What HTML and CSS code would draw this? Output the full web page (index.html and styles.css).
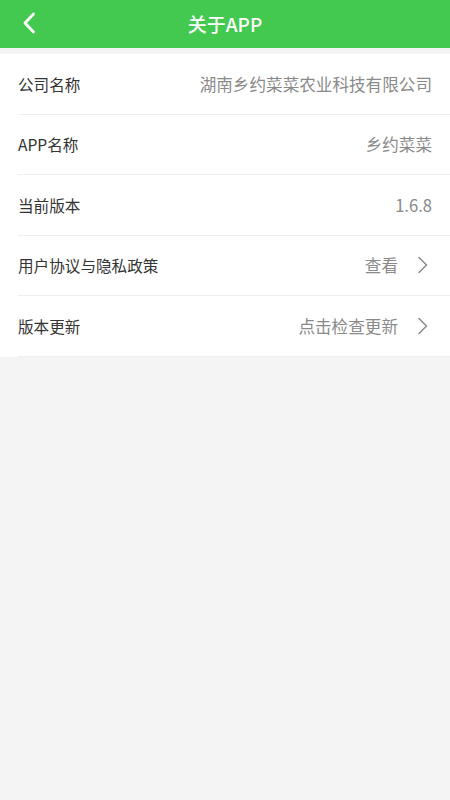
FILE: index.html
```html
<!DOCTYPE html>
<html lang="zh">
<head>
<meta charset="utf-8">
<title>关于APP</title>
<link rel="stylesheet" href="styles.css">
</head>
<body>
<header class="navbar">
  <span class="back">
    <svg width="14" height="22" viewBox="0 0 14 22"><path d="M11.5 2 L3 11 L11.5 20" fill="none" stroke="#fff" stroke-width="2.8" stroke-linecap="round" stroke-linejoin="round"/></svg>
  </span>
  <h1 class="title">关于APP</h1>
</header>
<main class="list">
  <div class="row"><span class="label">公司名称</span><span class="value">湖南乡约菜菜农业科技有限公司</span></div>
  <div class="row"><span class="label">APP名称</span><span class="value">乡约菜菜</span></div>
  <div class="row"><span class="label">当前版本</span><span class="value">1.6.8</span></div>
  <div class="row link"><span class="label">用户协议与隐私政策</span><span class="value">查看</span>
    <svg class="chev" width="12" height="18" viewBox="0 0 12 18"><path d="M2 1.5 L9.5 9 L2 16.5" fill="none" stroke="#8a8a8a" stroke-width="1.5" stroke-linecap="round" stroke-linejoin="round"/></svg>
  </div>
  <div class="row link"><span class="label">版本更新</span><span class="value">点击检查更新</span>
    <svg class="chev" width="12" height="18" viewBox="0 0 12 18"><path d="M2 1.5 L9.5 9 L2 16.5" fill="none" stroke="#8a8a8a" stroke-width="1.5" stroke-linecap="round" stroke-linejoin="round"/></svg>
  </div>
</main>
</body>
</html>
```
FILE: styles.css
```css
html, body {
  margin: 0;
  padding: 0;
}
body {
  background: #f4f4f4;
  font-family: "Noto Sans CJK SC", "Noto Sans", sans-serif;
  min-height: 800px;
}
.navbar {
  position: relative;
  height: 48px;
  background: #43c94f;
  display: flex;
  align-items: center;
  justify-content: center;
}
.back {
  position: absolute;
  left: 22px;
  top: 12px;
  display: flex;
}
.title {
  margin: 0;
  color: #fff;
  font-size: 19px;
  font-weight: 500;
  line-height: 46px;
}
.list {
  margin-top: 6px;
  background: #fff;
  padding-left: 18px;
}
.row {
  height: 59.5px;
  display: flex;
  align-items: center;
  padding-right: 18px;
  border-bottom: 1px solid #efefef;
}
.label {
  flex: 1;
  color: #333;
  font-size: 15.6px;
}
.value {
  color: #8a8a8a;
  font-size: 16.6px;
}
.chev {
  margin-left: 19px;
  margin-right: 3px;
}
```
